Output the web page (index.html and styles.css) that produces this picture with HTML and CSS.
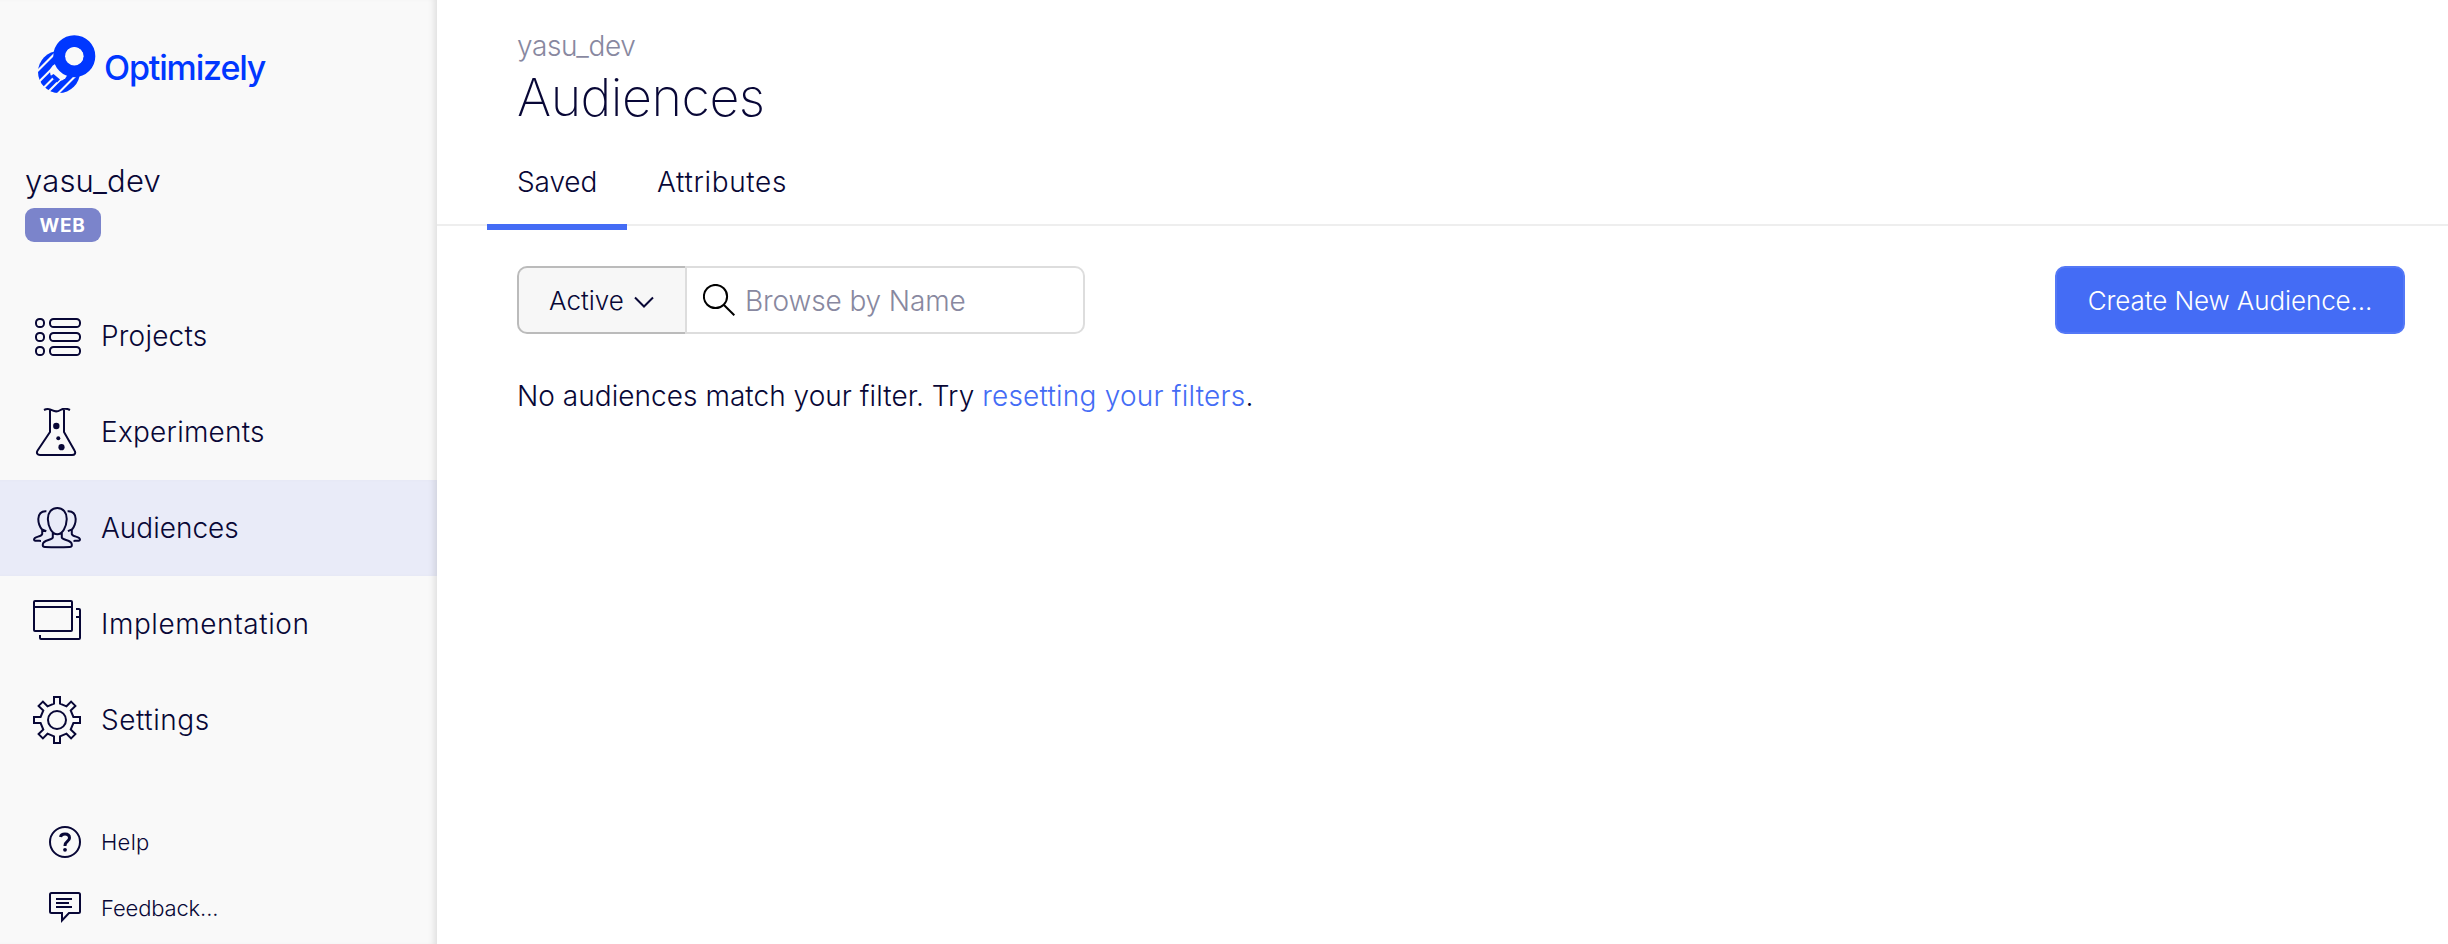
FILE: index.html
```
<!DOCTYPE html>
<html lang="en">
<head>
<meta charset="utf-8">
<title>Audiences</title>
<link rel="stylesheet" href="styles.css">
</head>
<body>
<div class="app">
  <aside class="sidebar">
    <div class="brand">
      <svg class="brand-mark" viewBox="36 33 62 62">
        <mask id="stripes" maskUnits="userSpaceOnUse" x="36" y="33" width="62" height="62">
          <rect x="36" y="33" width="62" height="62" fill="#fff"/>
          <circle cx="59" cy="72" r="9" fill="#000"/>
          <path d="M30 78.500 60 48.500M30 90.700 59 61.700M38 93.500 60 71.500M44 96 62 78M52 99.500 92 59.500" stroke="#000" stroke-width="2.100" fill="none"/>
          <path d="M50.500 76 57 82.500 60 79.500 53.500 74Z" fill="#fff"/>
        </mask>
        <circle cx="59" cy="72" r="21" fill="#0037ff" mask="url(#stripes)"/>
        <circle cx="74.3" cy="56.2" r="15" fill="none" stroke="#0037ff" stroke-width="12"/>
        <circle cx="74.3" cy="56.2" r="9.2" fill="#f9f9f9"/>
      </svg>
      <span class="brand-name">Optimizely</span>
    </div>
    <div class="project">
      <div class="project-name">yasu_dev</div>
      <span class="badge">WEB</span>
    </div>
    <nav class="nav">
      <a class="nav-item projects">
        <svg class="icon" viewBox="0 0 48 48"><rect x="3" y="7" width="8" height="8" rx="3.6"/><rect x="3" y="21" width="8" height="8" rx="3.6"/><rect x="3" y="35" width="8" height="8" rx="3.6"/><rect x="17" y="7" width="30" height="8" rx="3.6"/><rect x="17" y="21" width="30" height="8" rx="3.6"/><rect x="17" y="35" width="30" height="8" rx="3.6"/></svg>
        <span>Projects</span>
      </a>
      <a class="nav-item experiments">
        <svg class="icon" viewBox="0 0 48 48"><path d="M11 2C14 .4 17 1 19.500 2.400S25 3.500 27.500 2 34 .4 37 2M17 2V24L4.600 42.500C3 45 4.500 47 7 47H39C42 47 43 45 41.500 42.500L31 24V2"/><circle class="solid" cx="23.300" cy="18" r="3.200"/><circle class="solid" cx="25.300" cy="30.200" r="2"/><circle class="solid" cx="28.500" cy="39.200" r="3.100"/></svg>
        <span>Experiments</span>
      </a>
      <a class="nav-item audiences active">
        <svg class="icon" viewBox="0 0 48 48"><path d="M24.300 4C30 4 34 8.500 33.700 15.500 33.400 23 29.500 30.300 24.300 30.300S15.200 23 14.900 15.500C14.600 8.500 18.600 4 24.300 4ZM19.800 28.500V33.500C19 36.500 9.800 35.800 9.800 40.500V41.500C9.800 42.600 10.500 42.800 12 42.900 20 43.400 29 43.400 36.600 42.900 38.200 42.800 38.800 42.600 38.800 41.500V40.500C38.800 35.800 29.600 36.500 28.800 33.500V28.500M13.400 7.200C8 6.700 5.300 10.500 5.300 15 5.300 20 6.500 22.500 9 25.500L13.300 27.200M9.200 26V30C8.500 33.300 1 32 1 35.500 1 37 3 36.800 8 36.900M34.600 7.200C40 6.700 42.700 10.500 42.700 15 42.700 20 41.500 22.500 39 25.500L34.900 27.200M38.800 26V30C39.500 33.300 47 32 47 35.500 47 37 45 36.800 40.500 36.900"/></svg>
        <span>Audiences</span>
      </a>
      <a class="nav-item implementation">
        <svg class="icon" viewBox="0 0 48 48"><rect x="1" y="1" width="38" height="30" rx="1"/><path d="M1 7H39M43 9H46Q47 9 47 10V38Q47 39 46 39H8Q7 39 7 38V35M43 17H47"/></svg>
        <span>Implementation</span>
      </a>
      <a class="nav-item settings">
        <svg class="icon" viewBox="0 0 48 48"><path d="M21 1 27 1 27 7.600 33.500 10.300 38.100 5.600 42.400 9.900 37.700 14.500 40.400 21 47 21 47 27 40.400 27 37.700 33.500 42.400 38.100 38.100 42.400 33.500 37.700 27 40.400 27 47 21 47 21 40.400 14.500 37.700 9.900 42.400 5.600 38.100 10.300 33.500 7.600 27 1 27 1 21 7.600 21 10.300 14.500 5.600 9.900 9.900 5.600 14.500 10.300 21 7.600Z"/><circle cx="24" cy="24" r="9"/></svg>
        <span>Settings</span>
      </a>
    </nav>
    <div class="support">
      <a class="support-item help">
        <svg class="icon-sm" viewBox="0 0 32 32"><circle cx="16" cy="16" r="15"/><path class="bold" d="M11.500 11C12 8.500 14 8 16 8 18.800 8 20.500 9.700 20.500 12 20.500 15.500 16 15.500 16 19.500V20"/><circle class="solid" cx="16" cy="23.800" r="1.900"/></svg>
        <span>Help</span>
      </a>
      <a class="support-item feedback">
        <svg class="icon-sm" viewBox="0 0 32 32"><path d="M2.500 1H29.500Q31 1 31 2.500V19.500Q31 21 29.500 21H20L13 28.500V21H2.500Q1 21 1 19.500V2.500Q1 1 2.500 1ZM7 7H23M7 11H20M7 15H23"/></svg>
        <span>Feedback...</span>
      </a>
    </div>
  </aside>
  <main class="main">
    <header class="header">
      <div class="crumb">yasu_dev</div>
      <h1 class="title">Audiences</h1>
      <div class="tabs">
        <a class="tab saved">Saved</a>
        <a class="tab attributes">Attributes</a>
      </div>
    </header>
    <section class="content">
      <div class="toolbar">
        <div class="filter">
          <button class="filter-status"><span>Active</span><svg class="chevron" viewBox="0 0 20 12"><path d="M1 1.500 10 10.500 19 1.500"/></svg></button>
          <label class="search">
            <svg class="search-icon" viewBox="0 0 32 32"><circle cx="12.500" cy="12.500" r="11.600"/><path d="M20.700 20.700 31.300 31.300"/></svg>
            <input class="search-input" type="text" placeholder="Browse by Name">
          </label>
        </div>
        <button class="create">Create New Audience...</button>
      </div>
      <p class="empty">No audiences match your filter. Try <a class="link">resetting your filters</a>.</p>
    </section>
  </main>
</div>
</body>
</html>
```

FILE: styles.css
```
* { box-sizing: border-box; }

body {
  margin: 0;
  font-family: Inter, "Liberation Sans", sans-serif;
  font-size: 28px;
  font-weight: 300;
  color: #080736;
  background: #fff;
}

button, input { font: inherit; color: inherit; }

svg { display: block; flex: none; fill: none; stroke: #080736; stroke-width: 2; }
svg .solid { fill: #080736; stroke: none; }
svg .bold { stroke-width: 3; }

.app { display: flex; height: 944px; overflow: hidden; }

/* Sidebar */
.sidebar {
  flex: none;
  width: 437px;
  background: #f9f9f9;
  box-shadow: inset -7px 0 6px -4px rgba(0, 0, 0, .1);
}

.brand { display: flex; height: 160px; padding: 33px 0 0 36px; }
.brand-mark { width: 62px; height: 62px; stroke: none; }
.brand-name {
  padding: 15px 0 0 6px;
  font-size: 34px;
  font-weight: 500;
  line-height: 40px;
  letter-spacing: -1.15px;
  color: #0037ff;
}

.project { height: 128px; padding-left: 25px; }
.project-name { height: 48px; font-size: 31px; line-height: 41px; letter-spacing: .2px; }
.badge {
  display: flex;
  align-items: center;
  justify-content: center;
  width: 76px;
  height: 34px;
  padding-right: 1px;
  border-radius: 9px;
  background: #7b84cb;
  color: #fff;
  font-size: 19px;
  font-weight: 700;
  letter-spacing: .8px;
}

.nav-item { display: flex; align-items: center; gap: 20px; height: 96px; padding-left: 33px; }
.nav-item.active { background: #e9ebf8; box-shadow: inset -7px 0 6px -4px rgba(0, 0, 0, .1); }
.icon { width: 48px; height: 48px; }
.projects { letter-spacing: .2px; }
.experiments { letter-spacing: .24px; }
.implementation { letter-spacing: .58px; }
.settings { letter-spacing: .55px; }

.support { padding-top: 41px; font-size: 22px; }
.support-item { display: flex; align-items: center; gap: 20px; height: 66px; padding-left: 49px; }
.icon-sm { width: 32px; height: 32px; }
.help { letter-spacing: .3px; }
.feedback { letter-spacing: -.15px; }

/* Page header */
.main { flex: 1; min-width: 0; }
.header { height: 226px; padding: 28px 0 0 80px; border-bottom: 2px solid #eee; }
.crumb { line-height: 36px; letter-spacing: -.35px; color: #8888a0; }
.title { margin: 0; font-size: 52px; font-weight: 200; line-height: 68px; letter-spacing: -.5px; }
.tabs { display: flex; height: 98px; margin: 0 0 0 -30px; }
.tab { padding: 32px 30px 0; line-height: 36px; }
.saved { width: 140px; border-bottom: 6px solid #446cf5; letter-spacing: -.1px; }
.attributes { letter-spacing: .65px; }

/* Filters */
.content { padding: 40px 43px 0 80px; }
.toolbar { display: flex; justify-content: space-between; height: 68px; }
.filter { display: flex; width: 568px; }
.filter-status {
  display: flex;
  align-items: center;
  gap: 10px;
  width: 168px;
  padding: 0 0 0 30px;
  border: 2px solid #bbb;
  border-right: 0;
  border-radius: 10px 0 0 10px;
  background: #f7f7f7;
  font-size: 26px;
}
.chevron { width: 20px; height: 12px; margin-top: 4px; }
.search {
  display: flex;
  align-items: center;
  flex: 1;
  gap: 10px;
  padding-left: 16px;
  border: 2px solid #ddd;
  border-radius: 0 10px 10px 0;
}
.search-icon { width: 32px; height: 32px; stroke: #000; }
.search-input { width: 300px; padding: 1px 0 0; border: 0; outline: 0; background: none; letter-spacing: -.12px; }
.search-input::placeholder { color: #8888a0; opacity: 1; }
.create {
  width: 350px;
  padding: 0;
  border: 2px solid #5478f6;
  border-radius: 10px;
  background: #446cf5;
  color: #fff;
  font-size: 26px;
  letter-spacing: -.1px;
}

.empty { margin: 44px 0 0; line-height: 36px; letter-spacing: .04px; }
.link { color: #446cf5; letter-spacing: .22px; }
```
